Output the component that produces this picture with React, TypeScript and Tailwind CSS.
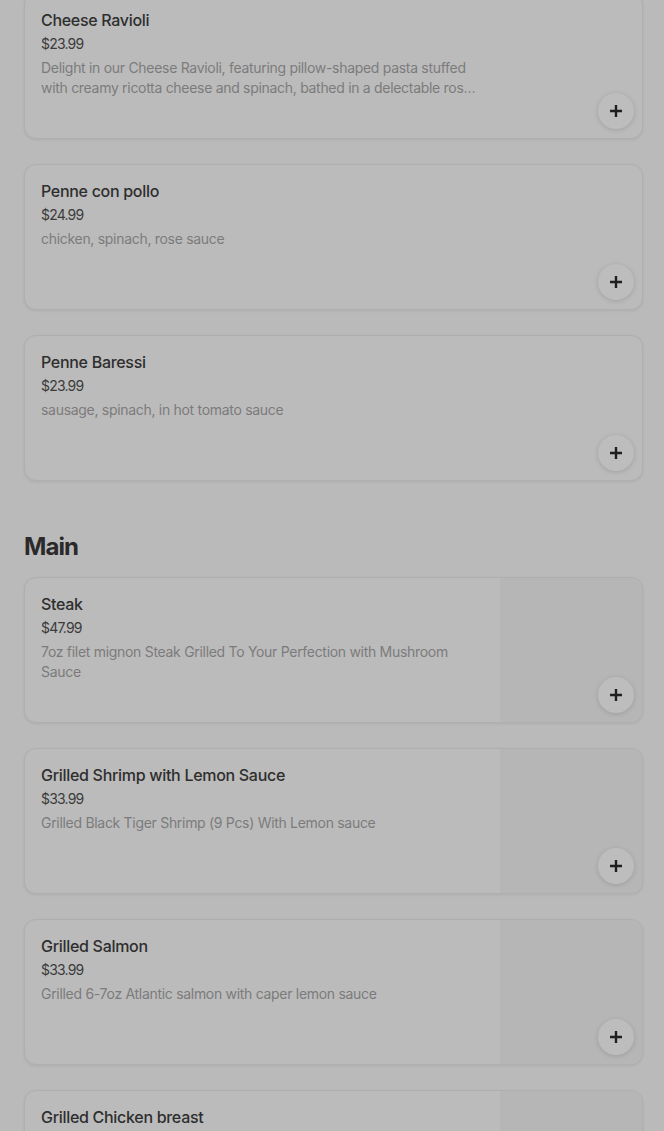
import React from 'react';

type Item = {
    name: string;
    price: string;
    description: string;
    image?: boolean;
};

const starters: Item[] = [
    {
        name: 'Cheese Ravioli',
        price: '$23.99',
        description:
            'Delight in our Cheese Ravioli, featuring pillow-shaped pasta stuffed with creamy ricotta cheese and spinach, bathed in a delectable rose sauce and topped with parmesan.',
    },
    { name: 'Penne con pollo', price: '$24.99', description: 'chicken, spinach, rose sauce' },
    { name: 'Penne Baressi', price: '$23.99', description: 'sausage, spinach, in hot tomato sauce' },
];

const mains: Item[] = [
    {
        name: 'Steak',
        price: '$47.99',
        description: '7oz filet mignon Steak Grilled To Your Perfection with Mushroom Sauce',
        image: true,
    },
    {
        name: 'Grilled Shrimp with Lemon Sauce',
        price: '$33.99',
        description: 'Grilled Black Tiger Shrimp (9 Pcs) With Lemon sauce',
        image: true,
    },
    {
        name: 'Grilled Salmon',
        price: '$33.99',
        description: 'Grilled 6-7oz Atlantic salmon with caper lemon sauce',
        image: true,
    },
    {
        name: 'Grilled Chicken breast',
        price: '$29.99',
        description: 'Grilled chicken breast with seasonal vegetables and lemon sauce',
        image: true,
    },
];

const PlusIcon: React.FC = () => (
    <svg className="w-[14px] h-[14px]" viewBox="0 0 14 14" fill="none" stroke="#1f1f1f" strokeWidth="2.4">
        <path d="M7 1v12M1 7h12" />
    </svg>
);

const MenuCard: React.FC<{ item: Item; first?: boolean }> = ({ item, first }) => (
    <div
        className={`relative flex h-[146px] rounded-xl border border-[#afafaf] bg-[#bbbbbb] shadow-[0_1px_3px_rgba(0,0,0,0.07)] overflow-hidden ${
            first ? '-mt-[7px]' : ''
        }`}
    >
        <div className="flex-1 min-w-0 pl-4 pr-5 pt-4">
            <div className="text-[16px] leading-5 font-medium tracking-[-0.3px] text-[#2e2e2e]">{item.name}</div>
            <div className="mt-1 text-[14px] leading-5 tracking-[-0.8px] text-[#3b3b3b]">{item.price}</div>
            <div className="mt-1 text-[14px] leading-5 tracking-[-0.3px] text-[#7b7b7b] line-clamp-2">
                {item.description}
            </div>
        </div>
        {item.image ? <div className="w-[142px] shrink-0 bg-[#b6b6b6]" /> : <div className="w-[142px] shrink-0" />}
        <button className="absolute right-[8px] bottom-[9px] w-9 h-9 rounded-full bg-[#bdbdbd] shadow-[0_1px_5px_rgba(0,0,0,0.14)] flex items-center justify-center">
            <PlusIcon />
        </button>
    </div>
);

const App: React.FC = () => {
    return (
        <div className="min-h-screen bg-[#bababa] overflow-hidden" style={{ fontFamily: 'Inter, "Noto Sans", sans-serif' }}>
            <div className="pl-6 pr-[21px] pb-6">
                <div className="flex flex-col gap-[25px]">
                    {starters.map((item, i) => (
                        <MenuCard key={item.name} item={item} first={i === 0} />
                    ))}
                </div>

                <h2 className="mt-[50px] mb-[14px] text-[24px] leading-8 font-bold tracking-[-0.9px] text-[#2a2a2a]">
                    Main
                </h2>

                <div className="flex flex-col gap-[25px]">
                    {mains.map((item) => (
                        <MenuCard key={item.name} item={item} />
                    ))}
                </div>
            </div>
        </div>
    );
};

export default App;
